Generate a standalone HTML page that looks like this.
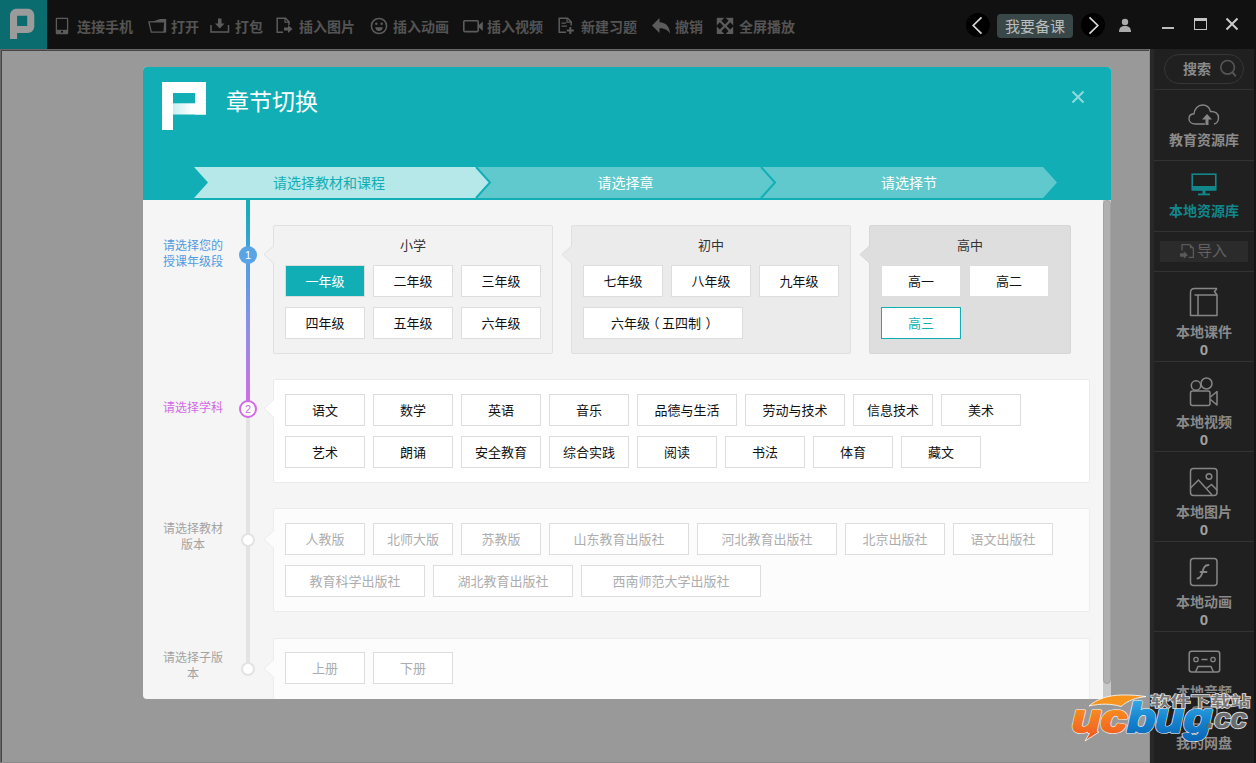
<!DOCTYPE html>
<html lang="zh-CN">
<head>
<meta charset="utf-8">
<title>章节切换</title>
<style>
*{box-sizing:border-box;margin:0;padding:0}
html,body{width:1256px;height:763px;overflow:hidden;background:#999}
body{font-family:"Liberation Sans","Noto Sans CJK SC",sans-serif;position:relative;font-size:13px;color:#333}
.abs{position:absolute}
/* top bar */
#topbar{position:absolute;left:0;top:0;width:1256px;height:49px;background:#111}
#toplogo{position:absolute;left:0;top:0;width:47px;height:49px;background:#0b6c70}
.tb{position:absolute;top:0;height:49px;line-height:54px;font-size:14px;font-weight:bold;color:#545454;white-space:nowrap}
.tbi{position:absolute;top:0}
/* main */
#main{position:absolute;left:0;top:49px;width:1150px;height:714px;background:#999;border-left:1px solid #686868;border-top:1px solid #686868;border-right:1px solid #8a8a8a;border-bottom:1px solid #8a8a8a;box-shadow:inset 1px 1px 0 #454545}
/* sidebar */
#side{position:absolute;left:1150px;top:49px;width:106px;height:714px;background:#202020;border-left:4px solid #282828}
.sep{position:absolute;left:1154px;width:102px;height:1px;background:#333}
.sl{position:absolute;left:1154px;width:100px;text-align:center;font-size:13px;font-weight:bold;color:#8a8a8a;line-height:16px}
/* dialog */
#dlg{position:absolute;left:143px;top:67px;width:968px;height:632px;background:#f5f5f5;border-radius:4px;overflow:hidden}
#dhead{position:absolute;left:0;top:0;width:968px;height:133px;background:#11afb5}
#dtitle{position:absolute;left:83px;top:19px;font-weight:400;font-size:23px;color:#fff;line-height:32px;letter-spacing:0}
.step{position:absolute;top:100px;height:31px;line-height:32px;text-align:center;font-size:14px;color:#fff}
.panel{position:absolute;border:1px solid #e2e2e2;border-radius:2px}
.gt{position:absolute;top:0;left:0;width:100%;text-align:center;font-size:13px;color:#333;line-height:16px}
.btn{position:absolute;height:32px;line-height:31px;text-align:center;background:#fff;border:1px solid #ddd;font-size:13px;color:#111;white-space:nowrap}
.btn.on{background:#11afb5;border-color:#dcdcdc;color:#fff}
.btn.sel{border-color:#11afb5;color:#11afb5}
.btn.dis{color:#adadad;border-color:#ddd}
.lbl{position:absolute;left:17px;width:66px;font-size:12px;line-height:16px;text-align:center}
</style>
</head>
<body>
<div id="main"></div>
<div id="topbar">
  <div id="toplogo"></div>
<svg class="tbi" style="left:0px;top:0px" width="47" height="49" viewBox="0 0 47 49"><path fill-rule="evenodd" d="M10 15.8C10 11.5 12.8 8.8 17 8.8H27.3C31.5 8.8 34.3 11.5 34.3 15.8V26C34.3 30.2 31.5 33 27.3 33H17.1V39H10Z M17.1 15.8H27.2V25.9H17.1Z" fill="#9b9b9b"/></svg>
<svg class="tbi" style="left:55px;top:17px" width="14" height="18" viewBox="0 0 14 18"><rect x="1.400" y="1.400" width="11.200" height="15.200" rx="0.600" fill="none" stroke="#5c5c5c" stroke-width="1.300"/><rect x="1.400" y="12.800" width="11.200" height="3.800" fill="#5c5c5c"/><rect x="6" y="13.800" width="2" height="1.800" fill="#111"/></svg>
<div class="tb" style="left:77px">连接手机</div>
<svg class="tbi" style="left:148px;top:18px" width="19" height="16" viewBox="148 18 19 16"><path d="M152 21.700L160 19H166.200V32.600H164L164.800 21.700Z" fill="#5c5c5c"/><path d="M148.900 21.900H164.800L164 32.200H151.300Z" fill="none" stroke="#5c5c5c" stroke-width="1.300"/></svg>
<div class="tb" style="left:171px">打开</div>
<svg class="tbi" style="left:210px;top:18px" width="20" height="15" viewBox="0 0 20 15"><path d="M1 7V14H18.5V7" fill="none" stroke="#5c5c5c" stroke-width="1.5"/><path d="M8 0.5H11.5V5.5H14.5L9.75 10.5L5 5.5H8Z" fill="#5c5c5c"/></svg>
<div class="tb" style="left:235px">打包</div>
<svg class="tbi" style="left:276px;top:17px" width="17" height="17" viewBox="0 0 17 17"><path d="M7 15.2H1.2V1.2H9.5L13 4.8V8" fill="none" stroke="#5c5c5c" stroke-width="1.5"/><path d="M9 1.2V5.2H13" fill="none" stroke="#5c5c5c" stroke-width="1.2"/><path d="M8 10.5H12V8L16.5 12L12 16V13.5H8Z" fill="#5c5c5c"/></svg>
<div class="tb" style="left:299px">插入图片</div>
<svg class="tbi" style="left:370px;top:17px" width="18" height="18" viewBox="0 0 18 18"><circle cx="9" cy="9" r="7.6" fill="none" stroke="#5c5c5c" stroke-width="1.5"/><circle cx="6.3" cy="6.8" r="1.2" fill="#5c5c5c"/><circle cx="11.7" cy="6.8" r="1.2" fill="#5c5c5c"/><path d="M5.2 10.2H12.8C12.3 13 10.8 14 9 14C7.2 14 5.7 13 5.2 10.2Z" fill="#5c5c5c"/></svg>
<div class="tb" style="left:393px">插入动画</div>
<svg class="tbi" style="left:463px;top:20px" width="21" height="13" viewBox="0 0 21 13"><rect x="0.8" y="0.8" width="14.4" height="10.8" rx="1" fill="none" stroke="#5c5c5c" stroke-width="1.6"/><path d="M16 5L19.8 1.5V11L16 7.5Z" fill="#5c5c5c"/></svg>
<div class="tb" style="left:487px">插入视频</div>
<svg class="tbi" style="left:558px;top:17px" width="17" height="18" viewBox="0 0 17 18"><path d="M8 15.2H1.2V1.2H9.5L13.2 4.8V8.5" fill="none" stroke="#5c5c5c" stroke-width="1.5"/><path d="M9 1.2V5.2H13" fill="none" stroke="#5c5c5c" stroke-width="1.2"/><path d="M3.5 6.2H8M3.5 9.2H9" stroke="#5c5c5c" stroke-width="1.3"/><path d="M12.3 10V17M8.8 13.5H15.8" stroke="#5c5c5c" stroke-width="2"/></svg>
<div class="tb" style="left:581px">新建习题</div>
<svg class="tbi" style="left:651px;top:17px" width="20" height="18" viewBox="0 0 20 18"><path d="M8.500 1V5.300C15 5.600 18.600 9.500 19 16.600C16.500 12.600 13.500 11.200 8.500 11.200V16L1 8.500Z" fill="#5c5c5c"/></svg>
<div class="tb" style="left:675px">撤销</div>
<svg class="tbi" style="left:716px;top:17px" width="18" height="18" viewBox="0 0 18 18"><rect x="0.800" y="0.800" width="16.400" height="16.200" fill="#5c5c5c"/><path d="M9 0L12.600 3.800L9 7.600L5.400 3.800Z M9 10.200L12.600 14L9 17.800L5.400 14Z M0.200 8.900L3.800 5.300L7.400 8.900L3.800 12.500Z M10.600 8.900L14.200 5.300L17.800 8.900L14.200 12.500Z" fill="#111"/></svg>
<div class="tb" style="left:739px">全屏播放</div>
<div class="abs" style="left:966px;top:13px;width:24px;height:24px;border-radius:12px;background:#000"></div>
<svg class="tbi" style="left:970px;top:16px" width="14" height="19" viewBox="0 0 14 19"><path d="M11.5 1.3L3.2 9.5L11.5 17.7" fill="none" stroke="#d8d8d8" stroke-width="1.7"/></svg>
<div class="abs" style="left:997px;top:14px;width:76px;height:24px;border-radius:4px;background:#3a4748;color:#b9bdbd;font-size:15px;line-height:25px;text-align:center">我要备课</div>
<div class="abs" style="left:1081px;top:13px;width:24px;height:24px;border-radius:12px;background:#000"></div>
<svg class="tbi" style="left:1087px;top:16px" width="14" height="19" viewBox="0 0 14 19"><path d="M2.5 1.3L10.800 9.5L2.5 17.7" fill="none" stroke="#d8d8d8" stroke-width="1.7"/></svg>
<svg class="tbi" style="left:1118px;top:18px" width="14" height="14" viewBox="0 0 14 14"><circle cx="7" cy="4" r="3.2" fill="#aaa"/><path d="M1 14C1 9.5 3.5 8 7 8C10.5 8 13 9.5 13 14Z" fill="#aaa"/></svg>
<div class="abs" style="left:1162px;top:27px;width:12px;height:2px;background:#bbb"></div>
<div class="abs" style="left:1194px;top:18px;width:13px;height:12px;border:1px solid #c4c4c4;border-top-width:3px"></div>
<svg class="tbi" style="left:1225px;top:17px" width="14" height="14" viewBox="0 0 14 14"><path d="M1.5 1.5L12.5 12.5M12.5 1.5L1.5 12.5" stroke="#ccc" stroke-width="2" fill="none"/></svg>
</div>
<div id="side"></div>
<div class="abs" style="left:1164px;top:54px;width:80px;height:30px;border:1px solid #363636;border-radius:15px"></div>
<div class="abs" style="left:1183px;top:60px;font-size:14px;font-weight:bold;color:#8a8a8a;line-height:18px">搜索</div>
<svg class="abs" style="left:1218px;top:59px" width="20" height="20" viewBox="0 0 20 20"><circle cx="9.600" cy="8.300" r="6.800" fill="none" stroke="#555" stroke-width="1.700"/><path d="M14.300 13.200L17.800 17.400" stroke="#555" stroke-width="2"/></svg>
<div class="sep" style="top:89px"></div>
<svg class="abs" style="left:1188px;top:104px" width="32" height="22" viewBox="0 0 32 22"><path d="M17 20H7.5C3.5 20 1 17.8 1 14.8C1 12 3 10 6 9.8C6.5 4.5 10 1 14.5 1C18.5 1 21.5 3.5 22.5 7.5C27 7 30.5 9.8 30.5 13.5C30.500 17 28.500 19.500 26 20" fill="none" stroke="#868686" stroke-width="1.4"/><path d="M17.500 21V15.500H14L19 10L24 15.500H20.500V21Z" fill="#868686"/></svg>
<div class="sl" style="top:132px;color:#8a8a8a;font-size:14px">教育资源库</div>
<div class="sep" style="top:160px"></div>
<svg class="abs" style="left:1191px;top:173px" width="26" height="23" viewBox="0 0 26 23"><rect x="1.2" y="1.2" width="23.6" height="15.6" fill="none" stroke="#11868b" stroke-width="1.6"/><rect x="1" y="13" width="24" height="4.500" fill="#11868b"/><rect x="11.500" y="17" width="3" height="4" fill="#11868b"/><rect x="7" y="20.500" width="12" height="1.800" fill="#11868b"/></svg>
<div class="sl" style="top:203px;color:#11868b;font-size:14px">本地资源库</div>
<div class="sep" style="top:231px"></div>
<div class="abs" style="left:1160px;top:241px;width:88px;height:21px;background:#2b2b2b"></div>
<svg class="abs" style="left:1179px;top:243px" width="16" height="18" viewBox="0 0 16 18"><path d="M3 7.500V1.700H10.800L14.400 5.300V14.300H9.800" fill="none" stroke="#5a5a5a" stroke-width="1.300"/><path d="M10.800 1.700V5.300H14.400Z" fill="#5a5a5a"/><path d="M1 10.200H4.800V8.200L8.800 12L4.800 15.800V13.800H1Z" fill="#5a5a5a"/></svg>
<div class="abs" style="left:1197px;top:242px;font-size:15px;color:#626262;line-height:18px">导入</div>
<div class="sep" style="top:271px"></div>
<svg class="abs" style="left:1189px;top:287px" width="30" height="30" viewBox="0 0 30 30"><path d="M28 1.500H5.500C3 1.500 1.500 3 1.500 5.500V28.500H28V8H5.500" fill="none" stroke="#868686" stroke-width="1.500" stroke-linejoin="round"/><path d="M28 1.500L25.500 4.500L28 8" fill="none" stroke="#868686" stroke-width="1.500"/><path d="M9 8V28.500" stroke="#868686" stroke-width="1.500"/></svg>
<div class="sl" style="top:324px;color:#8a8a8a;font-size:14px">本地课件</div>
<div class="sl" style="top:342px;color:#a0a0a0;font-size:15px">0</div>
<div class="sep" style="top:361px"></div>
<svg class="abs" style="left:1189px;top:377px" width="30" height="30" viewBox="0 0 30 30"><circle cx="7" cy="8.500" r="4.700" fill="none" stroke="#868686" stroke-width="1.500"/><circle cx="17.500" cy="6.500" r="5.500" fill="none" stroke="#868686" stroke-width="1.500"/><rect x="1.500" y="14" width="19.500" height="14.500" rx="2" fill="none" stroke="#868686" stroke-width="1.500"/><path d="M21.500 20L28 14.500V28L21.500 22.500" fill="none" stroke="#868686" stroke-width="1.500" stroke-linejoin="round"/></svg>
<div class="sl" style="top:414px;color:#8a8a8a;font-size:14px">本地视频</div>
<div class="sl" style="top:432px;color:#a0a0a0;font-size:15px">0</div>
<div class="sep" style="top:451px"></div>
<svg class="abs" style="left:1189px;top:467px" width="30" height="30" viewBox="0 0 30 30"><rect x="1.500" y="1.500" width="26.500" height="27" rx="3" fill="none" stroke="#868686" stroke-width="1.500"/><circle cx="20" cy="9.500" r="2.800" fill="none" stroke="#868686" stroke-width="1.500"/><path d="M1.500 21L9.500 13L23 28M17.500 21.500L22.500 17.500L28 23" fill="none" stroke="#868686" stroke-width="1.500"/></svg>
<div class="sl" style="top:504px;color:#8a8a8a;font-size:14px">本地图片</div>
<div class="sl" style="top:522px;color:#a0a0a0;font-size:15px">0</div>
<div class="sep" style="top:541px"></div>
<svg class="abs" style="left:1189px;top:557px" width="30" height="30" viewBox="0 0 30 30"><rect x="1.500" y="1.500" width="26.500" height="27" rx="3" fill="none" stroke="#868686" stroke-width="1.500"/><path d="M19.500 8C15.500 8 14.500 11 13.500 15C12.500 19 11.500 21 8.500 21.500M11.500 15H17.500" fill="none" stroke="#868686" stroke-width="1.800" stroke-linecap="round"/></svg>
<div class="sl" style="top:594px;color:#8a8a8a;font-size:14px">本地动画</div>
<div class="sl" style="top:612px;color:#a0a0a0;font-size:15px">0</div>
<div class="sep" style="top:631px"></div>
<svg class="abs" style="left:1188px;top:650px" width="33" height="23" viewBox="0 0 33 23"><rect x="1.200" y="1.200" width="30.500" height="20.800" rx="2.500" fill="none" stroke="#868686" stroke-width="1.500"/><circle cx="8" cy="9.500" r="2.200" fill="none" stroke="#868686" stroke-width="1.300"/><circle cx="25" cy="9.500" r="2.200" fill="none" stroke="#868686" stroke-width="1.300"/><path d="M13.500 9.500H19.500" stroke="#868686" stroke-width="1.500"/><path d="M7.500 22L10 16.500H23L25.500 22" fill="none" stroke="#868686" stroke-width="1.500"/></svg>
<div class="sl" style="top:684px;color:#8a8a8a;font-size:14px">本地音频</div>
<div class="abs" style="left:1154px;top:693px;width:102px;height:70px;background:#202020"></div>
<svg class="abs" style="left:1192px;top:706px" width="26" height="22" viewBox="0 0 26 22"><rect x="1" y="1" width="24" height="17" rx="2" fill="none" stroke="#868686" stroke-width="1.500"/></svg>
<div class="sl" style="top:735px;color:#8a8a8a;font-size:14px">我的网盘</div>
<div id="dlg">
  <div id="dhead"></div>
  <div id="dtitle">章节切换</div>
<svg class="abs" style="left:0;top:100px" width="968" height="33" viewBox="143 167 968 33">
<polygon points="194,167 476,167 490,182.5 476,198 194,198 208,182.5" fill="#b6e7e9"/>
<polygon points="476,167 761,167 775,182.5 761,198 476,198 490,182.5" fill="#5fc9cd"/>
<polygon points="761,167 1043,167 1057,182.5 1043,198 761,198 775,182.5" fill="#5fc9cd"/>
<polyline points="476,167 490,182.5 476,198" fill="none" stroke="#11afb5" stroke-width="2"/>
<polyline points="761,167 775,182.5 761,198" fill="none" stroke="#11afb5" stroke-width="2"/>
</svg>
<div class="step" style="left:64px;width:244px;color:#11afb5">请选择教材和课程</div>
<div class="step" style="left:347px;width:271px;color:#fff">请选择章</div>
<div class="step" style="left:632px;width:268px;color:#fff">请选择节</div>
<svg class="abs" style="left:928px;top:23px" width="14" height="14" viewBox="0 0 14 14"><path d="M1.5 1.5L12.5 12.5M12.5 1.5L1.5 12.5" stroke="#8fdadd" stroke-width="2" fill="none"/></svg>
<svg class="abs" style="left:19px;top:15px" width="44" height="48" viewBox="0 0 44 48">
<defs><linearGradient id="lg1" x1="0" y1="0" x2="1" y2="0"><stop offset="0" stop-color="#c8eef0"/><stop offset="0.6" stop-color="#fff"/></linearGradient></defs>
<rect x="0" y="0" width="11" height="48" fill="#fff"/>
<rect x="0" y="0" width="44" height="11" fill="#fff"/>
<rect x="33" y="0" width="11" height="32.500" fill="#fff"/>
<rect x="11" y="21.300" width="33" height="11.200" fill="url(#lg1)"/>
</svg>
<div class="abs" style="left:103px;top:133px;width:4px;height:209px;background:linear-gradient(to bottom,#11afb5 0,#2aa6c6 30px,#4a9fe3 55px,#8f8ee6 130px,#d36be6 205px)"></div>
<div class="abs" style="left:103px;top:342px;width:4px;height:260px;background:#e3e3e3"></div>
<div class="abs" style="left:96px;top:179px;width:18px;height:18px;border-radius:9px;background:#58a4e5;color:#fff;font-size:11px;line-height:18px;text-align:center">1</div>
<div class="abs" style="left:96px;top:333px;width:18px;height:18px;border-radius:9px;background:#fff;border:2px solid #d36be6;color:#d36be6;font-size:11px;line-height:14px;text-align:center">2</div>
<div class="abs" style="left:98px;top:466px;width:14px;height:14px;border-radius:7px;background:#fff;border:2px solid #e3e3e3"></div>
<div class="abs" style="left:98px;top:595px;width:14px;height:14px;border-radius:7px;background:#fff;border:2px solid #e3e3e3"></div>
<div class="lbl" style="top:171px;color:#4f9be0">请选择您的<br>授课年级段</div>
<div class="lbl" style="top:333px;color:#d36be6">请选择学科</div>
<div class="lbl" style="top:454px;color:#a3a3a3">请选择教材<br>版本</div>
<div class="lbl" style="top:583px;color:#a3a3a3">请选择子版<br>本</div>
<div class="panel" style="left:130px;top:158px;width:280px;height:129px;background:#f2f2f2;border-color:#e0e0e0"><div class="gt" style="top:12px">小学</div></div><svg class="abs" style="left:120px;top:178.0px" width="11" height="19" viewBox="0 0 11 19"><path d="M11 0.500L1 9.500L11 18.500" fill="#f2f2f2" stroke="#e0e0e0" stroke-width="1"/></svg>
<div class="panel" style="left:428px;top:158px;width:280px;height:129px;background:#ebebeb;border-color:#e0e0e0"><div class="gt" style="top:12px">初中</div></div><svg class="abs" style="left:418px;top:178.0px" width="11" height="19" viewBox="0 0 11 19"><path d="M11 0.500L1 9.500L11 18.500" fill="#ebebeb" stroke="#e0e0e0" stroke-width="1"/></svg>
<div class="panel" style="left:726px;top:158px;width:202px;height:129px;background:#dedede;border-color:#d6d6d6"><div class="gt" style="top:12px">高中</div></div><svg class="abs" style="left:716px;top:178.0px" width="11" height="19" viewBox="0 0 11 19"><path d="M11 0.500L1 9.500L11 18.500" fill="#dedede" stroke="#d6d6d6" stroke-width="1"/></svg>
<div class="btn on" style="left:142px;top:198px;width:80px">一年级</div>
<div class="btn " style="left:230px;top:198px;width:80px">二年级</div>
<div class="btn " style="left:318px;top:198px;width:80px">三年级</div>
<div class="btn " style="left:142px;top:240px;width:80px">四年级</div>
<div class="btn " style="left:230px;top:240px;width:80px">五年级</div>
<div class="btn " style="left:318px;top:240px;width:80px">六年级</div>
<div class="btn " style="left:440px;top:198px;width:80px">七年级</div>
<div class="btn " style="left:528px;top:198px;width:80px">八年级</div>
<div class="btn " style="left:616px;top:198px;width:80px">九年级</div>
<div class="btn " style="left:440px;top:240px;width:160px">六年级<span style="position:relative;left:-3.5px">（</span><span style="position:relative;left:-1px">五四制</span><span style="position:relative;left:3.5px">）</span></div>
<div class="btn " style="left:738px;top:198px;width:80px">高一</div>
<div class="btn " style="left:826px;top:198px;width:80px">高二</div>
<div class="btn sel" style="left:738px;top:240px;width:80px">高三</div>
<div class="panel" style="left:130px;top:312px;width:817px;height:104px;background:#fff;border-color:#ebebeb"></div><svg class="abs" style="left:120px;top:332.0px" width="11" height="19" viewBox="0 0 11 19"><path d="M11 0.500L1 9.500L11 18.500" fill="#fff" stroke="#ebebeb" stroke-width="1"/></svg>
<div class="btn " style="left:142px;top:327px;width:80px">语文</div>
<div class="btn " style="left:230px;top:327px;width:80px">数学</div>
<div class="btn " style="left:318px;top:327px;width:80px">英语</div>
<div class="btn " style="left:406px;top:327px;width:80px">音乐</div>
<div class="btn " style="left:494px;top:327px;width:100px">品德与生活</div>
<div class="btn " style="left:602px;top:327px;width:100px">劳动与技术</div>
<div class="btn " style="left:710px;top:327px;width:80px">信息技术</div>
<div class="btn " style="left:798px;top:327px;width:80px">美术</div>
<div class="btn " style="left:142px;top:369px;width:80px">艺术</div>
<div class="btn " style="left:230px;top:369px;width:80px">朗诵</div>
<div class="btn " style="left:318px;top:369px;width:80px">安全教育</div>
<div class="btn " style="left:406px;top:369px;width:80px">综合实践</div>
<div class="btn " style="left:494px;top:369px;width:80px">阅读</div>
<div class="btn " style="left:582px;top:369px;width:80px">书法</div>
<div class="btn " style="left:670px;top:369px;width:80px">体育</div>
<div class="btn " style="left:758px;top:369px;width:80px">藏文</div>
<div class="panel" style="left:130px;top:441px;width:817px;height:104px;background:#fcfcfc;border-color:#ececec"></div><svg class="abs" style="left:120px;top:463.0px" width="11" height="19" viewBox="0 0 11 19"><path d="M11 0.500L1 9.500L11 18.500" fill="#fcfcfc" stroke="#ececec" stroke-width="1"/></svg>
<div class="btn dis" style="left:142px;top:456px;width:80px">人教版</div>
<div class="btn dis" style="left:230px;top:456px;width:80px">北师大版</div>
<div class="btn dis" style="left:318px;top:456px;width:80px">苏教版</div>
<div class="btn dis" style="left:406px;top:456px;width:140px">山东教育出版社</div>
<div class="btn dis" style="left:554px;top:456px;width:140px">河北教育出版社</div>
<div class="btn dis" style="left:702px;top:456px;width:100px">北京出版社</div>
<div class="btn dis" style="left:810px;top:456px;width:100px">语文出版社</div>
<div class="btn dis" style="left:142px;top:498px;width:140px">教育科学出版社</div>
<div class="btn dis" style="left:290px;top:498px;width:140px">湖北教育出版社</div>
<div class="btn dis" style="left:438px;top:498px;width:180px">西南师范大学出版社</div>
<div class="panel" style="left:130px;top:571px;width:817px;height:102px;background:#fcfcfc;border-color:#ececec"></div><svg class="abs" style="left:120px;top:592.0px" width="11" height="19" viewBox="0 0 11 19"><path d="M11 0.500L1 9.500L11 18.500" fill="#fcfcfc" stroke="#ececec" stroke-width="1"/></svg>
<div class="btn dis" style="left:142px;top:585px;width:80px">上册</div>
<div class="btn dis" style="left:230px;top:585px;width:80px">下册</div>
<div class="abs" style="left:960px;top:133px;width:8px;height:499px;background:#c8c8c8"></div>
<div class="abs" style="left:960px;top:133px;width:8px;height:484px;border-radius:4px;background:#b0b0b0;border:1px solid #a2a2a2"></div>
</div>
<div class="abs" style="left:1254px;top:49px;width:2px;height:714px;background:#151515"></div>
<svg class="abs" style="left:1060px;top:685px" width="196" height="70" viewBox="1060 685 196 70">
<defs>
<linearGradient id="og" x1="0" y1="0" x2="0" y2="1"><stop offset="0" stop-color="#f9a01f"/><stop offset="1" stop-color="#f15a22"/></linearGradient>
<linearGradient id="bg" x1="0" y1="0" x2="0" y2="1"><stop offset="0" stop-color="#3fb2e8"/><stop offset="0.55" stop-color="#1584d0"/><stop offset="1" stop-color="#0a66b5"/></linearGradient>
</defs>
<path d="M1089 706C1097 699 1108 695.200 1122 695C1131 694.800 1139 695.500 1146 696.600C1136 697.500 1128 700.500 1121 706.500C1112 703.500 1100 703.500 1089 706Z" fill="#f7941d" stroke="#fff" stroke-width="0.800"/>
<g font-family="'Liberation Sans',sans-serif" font-weight="bold" font-style="italic" stroke-linejoin="round">
<g stroke="#f4f4f4" stroke-width="3.500" fill="#fff">
<text x="1072" y="731.500" font-size="39" textLength="55" lengthAdjust="spacingAndGlyphs">uc</text>
<text x="1127" y="731.500" font-size="41" textLength="85" lengthAdjust="spacingAndGlyphs">bug</text>
<text x="1206" y="728" font-size="27" textLength="41" lengthAdjust="spacingAndGlyphs" stroke-width="2.400" stroke="#ddd">.cc</text>
</g>
<path d="M1092 729L1085 741L1099 732Z" fill="#f15a22" stroke="#fff" stroke-width="0.800"/>
<text x="1072" y="731.500" font-size="39" textLength="55" lengthAdjust="spacingAndGlyphs" fill="url(#og)" stroke="url(#og)" stroke-width="2.400">uc</text>
<text x="1127" y="731.500" font-size="41" textLength="85" lengthAdjust="spacingAndGlyphs" fill="url(#bg)" stroke="url(#bg)" stroke-width="2.400">bug</text>
<text x="1206" y="728" font-size="27" textLength="41" lengthAdjust="spacingAndGlyphs" fill="#6a6b6d" stroke="#6a6b6d" stroke-width="0.500">.cc</text>
</g>
<text transform="translate(1150.500 706.300) scale(1 0.700)" font-family="'Liberation Sans','Noto Sans CJK SC',sans-serif" font-weight="700" font-size="20" fill="#777" stroke="#e8e8e8" stroke-width="1.800" paint-order="stroke" textLength="100" lengthAdjust="spacingAndGlyphs">软件下载站</text>
</svg>
</body>
</html>
